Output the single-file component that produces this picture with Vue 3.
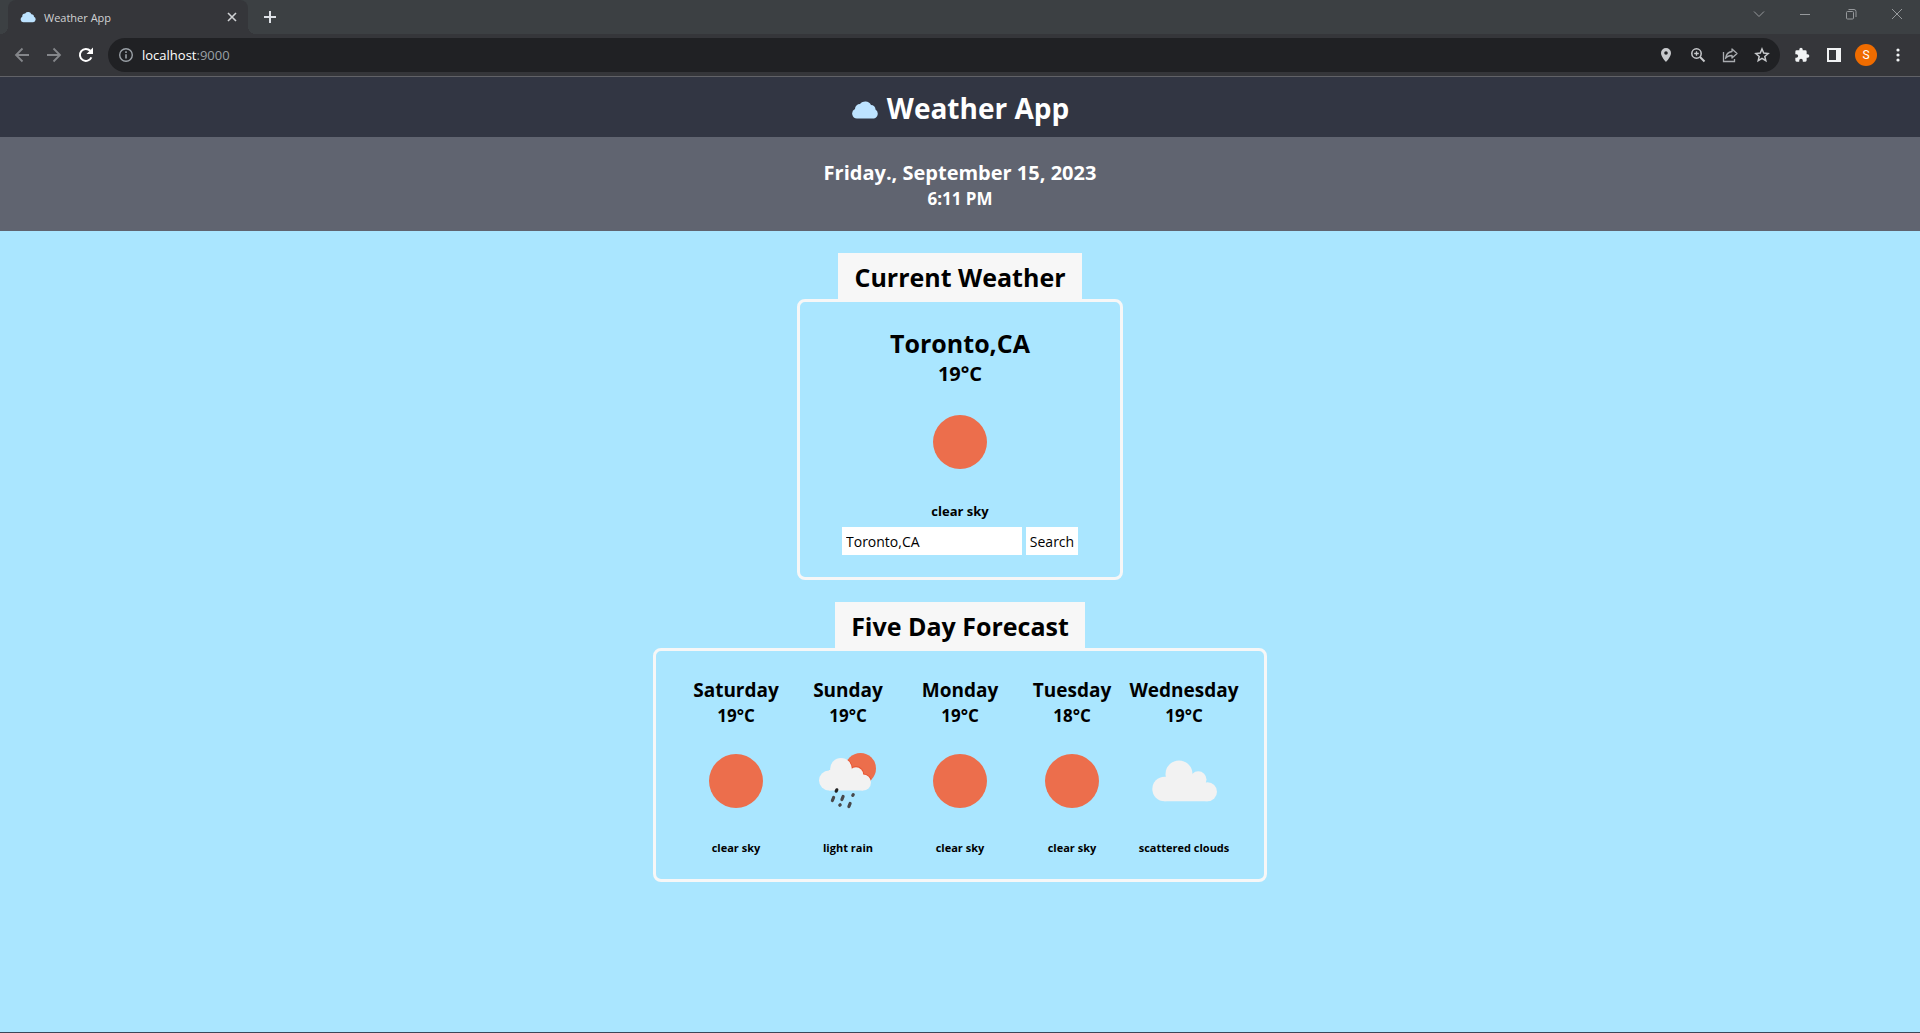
<script setup>
import { ref } from 'vue'

const city = ref('Toronto,CA')

const forecast = [
  { day: 'Saturday', temp: '19°C', icon: 'sun', text: 'clear sky' },
  { day: 'Sunday', temp: '19°C', icon: 'rain', text: 'light rain' },
  { day: 'Monday', temp: '19°C', icon: 'sun', text: 'clear sky' },
  { day: 'Tuesday', temp: '18°C', icon: 'sun', text: 'clear sky' },
  { day: 'Wednesday', temp: '19°C', icon: 'cloud', text: 'scattered clouds' },
]
</script>

<template>
  <div class="window">
    <div class="tab-strip">
      <div class="tab">
        <svg class="favicon" viewBox="0 0 28 28" aria-hidden="true">
          <path d="M6 23a5 5 0 0 1-2-9.500a5 5 0 0 1 5-5.500a6.500 6.500 0 0 1 11 1a4.500 4.500 0 0 1 4.500 4.500a5 5 0 0 1-1.500 9.500z" fill="#bde3ff" />
        </svg>
        <span class="tab-title">Weather App</span>
        <button class="tab-close" type="button" aria-label="Close tab">
          <svg width="16" height="16" viewBox="0 0 16 16"><path d="M4 4l8 8M12 4l-8 8" stroke="#d0d2d4" stroke-width="1.600" /></svg>
        </button>
      </div>
      <button class="new-tab" type="button" aria-label="New tab">
        <svg width="16" height="16" viewBox="0 0 16 16"><path d="M8 2v12M2 8h12" stroke="#dee1e6" stroke-width="2" /></svg>
      </button>
      <div class="controls">
        <button type="button" aria-label="Search tabs">
          <svg width="12" height="12" viewBox="0 0 12 12"><path d="M1 3.500l5 5l5-5" /></svg>
        </button>
        <button type="button" aria-label="Minimize">
          <svg width="12" height="12" viewBox="0 0 12 12"><path d="M1 6.500h10" /></svg>
        </button>
        <button type="button" aria-label="Restore">
          <svg width="12" height="12" viewBox="0 0 12 12"><rect x="1.500" y="3.500" width="7" height="7.500" rx="1" /><path d="M3.500 1.500h5.500a2 2 0 0 1 2 2v5.500" /></svg>
        </button>
        <button type="button" aria-label="Close">
          <svg width="12" height="12" viewBox="0 0 12 12"><path d="M1 1l10 10M11 1l-10 10" /></svg>
        </button>
      </div>
    </div>

    <div class="toolbar">
      <button class="tool" type="button" aria-label="Back">
        <svg width="16" height="16" viewBox="0 0 16 16" fill="none" stroke="#84868a" stroke-width="1.800"><path d="M15 8H2M8.500 1.500L2 8l6.500 6.500" /></svg>
      </button>
      <button class="tool" type="button" aria-label="Forward">
        <svg width="16" height="16" viewBox="0 0 16 16" fill="none" stroke="#84868a" stroke-width="1.800"><path d="M1 8h13M7.500 1.500L14 8l-6.500 6.500" /></svg>
      </button>
      <button class="tool" type="button" aria-label="Reload">
        <svg width="16" height="16" viewBox="0 0 16 16"><path d="M13.400 10.300A6 6 0 1 1 12.300 3.800" fill="none" stroke="#fff" stroke-width="2" /><path d="M15 0.500V7H8.500z" fill="#fff" /></svg>
      </button>
      <div class="address">
        <svg class="info" viewBox="0 0 16 16" fill="none" stroke="#9aa0a6"><circle cx="8" cy="8" r="6.300" stroke-width="1.400" /><path d="M8 7.200v4.300M8 4.300v1.600" stroke-width="1.600" /></svg>
        <span class="host">localhost</span><span class="port">:9000</span>
        <div class="address-tools">
          <button class="tool" type="button" aria-label="Location">
            <svg width="16" height="16" viewBox="0 0 16 16"><path fill-rule="evenodd" d="M8 1a5 5 0 0 0-5 5c0 3.700 5 9 5 9s5-5.300 5-9a5 5 0 0 0-5-5zm0 3.200a1.800 1.800 0 1 1 0 3.600a1.800 1.800 0 0 1 0-3.600z" fill="#c7c9cc" /></svg>
          </button>
          <button class="tool" type="button" aria-label="Zoom">
            <svg width="16" height="16" viewBox="0 0 16 16" fill="none" stroke="#c7c9cc"><circle cx="6.500" cy="6.500" r="4.700" stroke-width="1.500" /><path d="M10 10l4.500 4.500" stroke-width="2" /><path d="M6.500 4.200v4.600M4.200 6.500h4.600" stroke-width="1.300" /></svg>
          </button>
          <button class="tool" type="button" aria-label="Share">
            <svg width="16" height="16" viewBox="0 0 16 16" fill="none" stroke="#a9acb0" stroke-width="1.300"><path d="M1.500 5v9.500h11V12" /><path d="M10 2l5 4.500l-5 4.500V8.500c-3 0-5 .8-6.500 3c.4-3.500 2.500-6.400 6.500-7z" stroke-linejoin="round" /></svg>
          </button>
          <button class="tool" type="button" aria-label="Bookmark">
            <svg width="16" height="16" viewBox="0 0 16 16" fill="none" stroke="#c7c9cc" stroke-width="1.500"><path d="M8 2l1.700 4.100l4.400.4l-3.300 2.900l1 4.300L8 11.400l-3.800 2.300l1-4.300L1.900 6.500l4.400-.4z" /></svg>
          </button>
        </div>
      </div>
      <button class="tool" type="button" aria-label="Extensions">
        <svg width="16" height="16" viewBox="0 0 24 24"><path fill="#f1f3f4" d="M20.500 11H19V7a2 2 0 0 0-2-2h-4V3.500a2.500 2.500 0 0 0-5 0V5H4a2 2 0 0 0-2 2v3.800h1.500a2.700 2.700 0 0 1 0 5.400H2V20a2 2 0 0 0 2 2h3.800v-1.500a2.700 2.700 0 0 1 5.400 0V22H17a2 2 0 0 0 2-2v-4h1.500a2.500 2.500 0 0 0 0-5z" /></svg>
      </button>
      <button class="tool" type="button" aria-label="Side panel">
        <svg width="16" height="16" viewBox="0 0 16 16"><path fill-rule="evenodd" fill="#f1f3f4" d="M1 1h14v14H1zM3 3v10h7V3z" /></svg>
      </button>
      <button class="tool" type="button" aria-label="Profile"><span class="avatar">S</span></button>
      <button class="tool" type="button" aria-label="Menu">
        <svg width="16" height="16" viewBox="0 0 16 16" fill="#f1f3f4"><circle cx="8" cy="3" r="1.600" /><circle cx="8" cy="8" r="1.600" /><circle cx="8" cy="13" r="1.600" /></svg>
      </button>
    </div>

    <header class="site-header">
      <svg class="logo" viewBox="0 0 28 28" aria-hidden="true">
        <path d="M6 22.500a5 5 0 0 1-2-9.500a5 5 0 0 1 5-5a6.500 6.500 0 0 1 11 1a4.500 4.500 0 0 1 4.500 4.500a5 5 0 0 1-1.500 9z" fill="#bde3ff" />
      </svg>
      <h1>Weather App</h1>
    </header>

    <section class="clock">
      <h3>Friday., September 15, 2023</h3>
      <h4>6:11 PM</h4>
    </section>

    <main>
      <section class="panel">
        <h2 class="panel-title">Current Weather</h2>
        <div class="card current">
          <h2>Toronto,CA</h2>
          <h3>19°C</h3>
          <svg class="icon" viewBox="0 0 100 100" role="img" aria-label="clear sky"><circle cx="50" cy="50" r="27" fill="#ec6e4c" /></svg>
          <p>clear sky</p>
          <form class="search" @submit.prevent>
            <input v-model="city" type="text" aria-label="City">
            <button type="submit">Search</button>
          </form>
        </div>
      </section>

      <section class="panel">
        <h2 class="panel-title">Five Day Forecast</h2>
        <div class="card forecast">
          <article v-for="item in forecast" :key="item.day" class="day">
            <h3>{{ item.day }}</h3>
            <h4>{{ item.temp }}</h4>
            <svg class="icon" viewBox="0 0 100 100" role="img" :aria-label="item.text">
              <circle v-if="item.icon === 'sun'" cx="50" cy="50" r="27" fill="#ec6e4c" />
              <g v-else-if="item.icon === 'rain'">
                <clipPath id="sun-disc"><circle cx="62.500" cy="37.500" r="15.500" /></clipPath>
                <circle cx="62.500" cy="37.500" r="15.500" fill="#ec6e4c" />
                <g fill="#e8532f" clip-path="url(#sun-disc)">
                  <circle cx="43" cy="38" r="11.700" />
                  <circle cx="58" cy="43.500" r="8.200" />
                  <circle cx="65" cy="51.500" r="9" />
                </g>
                <g fill="#f2f2f2">
                  <circle cx="43" cy="38" r="10.900" />
                  <circle cx="31" cy="49.500" r="10" />
                  <circle cx="58" cy="43.500" r="7.200" />
                  <circle cx="65" cy="51.500" r="8" />
                  <path d="M31 39h22l12 9v11.500H31z" />
                </g>
                <g stroke="#48484a" stroke-width="3.200" stroke-linecap="round">
                  <path d="M38.200 60.200l.6-1.400" stroke="#222" />
                  <path d="M34.400 69.500l1.200-3" />
                  <path d="M43.900 68.500l1.200-3" />
                  <path d="M54.800 64.300l.4-.6" />
                  <path d="M41.800 74.200l.4-.4" />
                  <path d="M50.900 75.500l1.200-3" />
                </g>
              </g>
              <g v-else fill="#f2f2f2">
                <circle cx="45" cy="43" r="13.500" />
                <circle cx="30.500" cy="58" r="12.200" />
                <circle cx="64.300" cy="48.500" r="8.200" />
                <circle cx="73.500" cy="60.700" r="9.500" />
                <path d="M31 46h34l8.500 14v10.200H30.500z" />
              </g>
            </svg>
            <p>{{ item.text }}</p>
          </article>
        </div>
      </section>
    </main>
  </div>
</template>

<style>
body {
  margin: 0;
  background: #aae6ff;
}
</style>

<style scoped>
.window {
  box-sizing: border-box;
  min-height: 100vh;
  border-bottom: 1px solid #3c4658;
  background: #aae6ff;
  font-family: "Open Sans", "Noto Sans", sans-serif;
  color: #000;
}

h1, h2, h3, h4, p {
  margin: 0;
  font-weight: 700;
}

button {
  display: flex;
  align-items: center;
  justify-content: center;
  padding: 0;
  border: 0;
  background: none;
  font: inherit;
}

/* Browser frame */
.tab-strip {
  display: flex;
  height: 34px;
  padding-left: 8px;
  background: #3c4043;
}

.tab {
  position: relative;
  display: flex;
  align-items: center;
  box-sizing: border-box;
  width: 240px;
  padding: 0 8px 0 12px;
  border-radius: 8px 8px 0 0;
  background: #35363a;
}

.tab::before,
.tab::after {
  content: "";
  position: absolute;
  bottom: 0;
  width: 8px;
  height: 8px;
}

.tab::before {
  right: 100%;
  background: radial-gradient(circle at 0 0, transparent 8px, #35363a 8px);
}

.tab::after {
  left: 100%;
  background: radial-gradient(circle at 100% 0, transparent 8px, #35363a 8px);
}

.favicon {
  width: 16px;
  height: 16px;
  margin-right: 8px;
}

.tab-title {
  flex: 1;
  font-size: 11px;
  color: #d0d2d4;
}

.tab-close {
  width: 16px;
  height: 16px;
}

.new-tab {
  width: 28px;
  margin-left: 8px;
}

.controls {
  display: flex;
  height: 28px;
  margin-left: auto;
}

.controls button {
  width: 46px;
}

.controls svg {
  fill: none;
  stroke: #96999c;
}

.toolbar {
  display: flex;
  align-items: center;
  height: 42px;
  padding: 0 6px;
  border-bottom: 1px solid #616267;
  background: #35363a;
}

.tool {
  width: 32px;
  height: 32px;
}

.address {
  display: flex;
  flex: 1;
  align-items: center;
  height: 34px;
  margin: 0 6px;
  padding: 0 2px 0 10px;
  border-radius: 17px;
  background: #202124;
  font-size: 13px;
}

.info {
  width: 16px;
  height: 16px;
  margin-right: 8px;
}

.host {
  color: #fff;
}

.port {
  color: #9aa0a6;
}

.address-tools {
  display: flex;
  margin-left: auto;
}

.avatar {
  width: 22px;
  border-radius: 50%;
  background: #ef6c00;
  color: #fff;
  font-family: Roboto, sans-serif;
  font-size: 12px;
  line-height: 22px;
}

/* Page */
.site-header {
  display: flex;
  align-items: center;
  justify-content: center;
  gap: 8px;
  background: #323643;
  color: #fff;
}

.logo {
  width: 28px;
  height: 28px;
  margin-top: 6px;
}

h1 {
  padding-top: 2px;
  font-size: 28px;
  line-height: 58px;
}

.clock {
  padding: 22px 0 20px;
  background: #606470;
  color: #fff;
  text-align: center;
}

h3 {
  font-size: 20px;
  line-height: 28px;
}

h4 {
  font-size: 17px;
  line-height: 24px;
}

.panel {
  display: flex;
  flex-direction: column;
  align-items: center;
  padding-top: 22px;
  text-align: center;
}

.panel-title {
  padding: 2px 16px 0;
  background: #f7f7f7;
  font-size: 25px;
  line-height: 44px;
}

.card {
  border: 3px solid #f7f7f7;
  border-radius: 8px;
}

.icon {
  display: block;
  width: 100px;
  height: 106px;
  margin: 0 auto;
}

.current {
  padding: 25px 42px 22px;
}

.current h2 {
  font-size: 25px;
  line-height: 32px;
}

.current h3 {
  line-height: 30px;
}

.current p {
  font-size: 13px;
  line-height: 32px;
}

.search {
  display: flex;
  gap: 4px;
}

.search input,
.search button {
  box-sizing: border-box;
  height: 28px;
  border: 0;
  border-radius: 0;
  background: #fff;
  color: #000;
  font-family: inherit;
  font-size: 14px;
}

.search input {
  width: 180px;
  padding: 0 4px;
}

.search button {
  width: 52px;
}

.forecast {
  display: flex;
  padding: 25px 24px 17px;
}

.day {
  display: flex;
  flex-direction: column;
  align-items: center;
  width: 112px;
}

.day h3 {
  font-size: 19px;
}

.day p {
  font-size: 11px;
  line-height: 28px;
}
</style>
